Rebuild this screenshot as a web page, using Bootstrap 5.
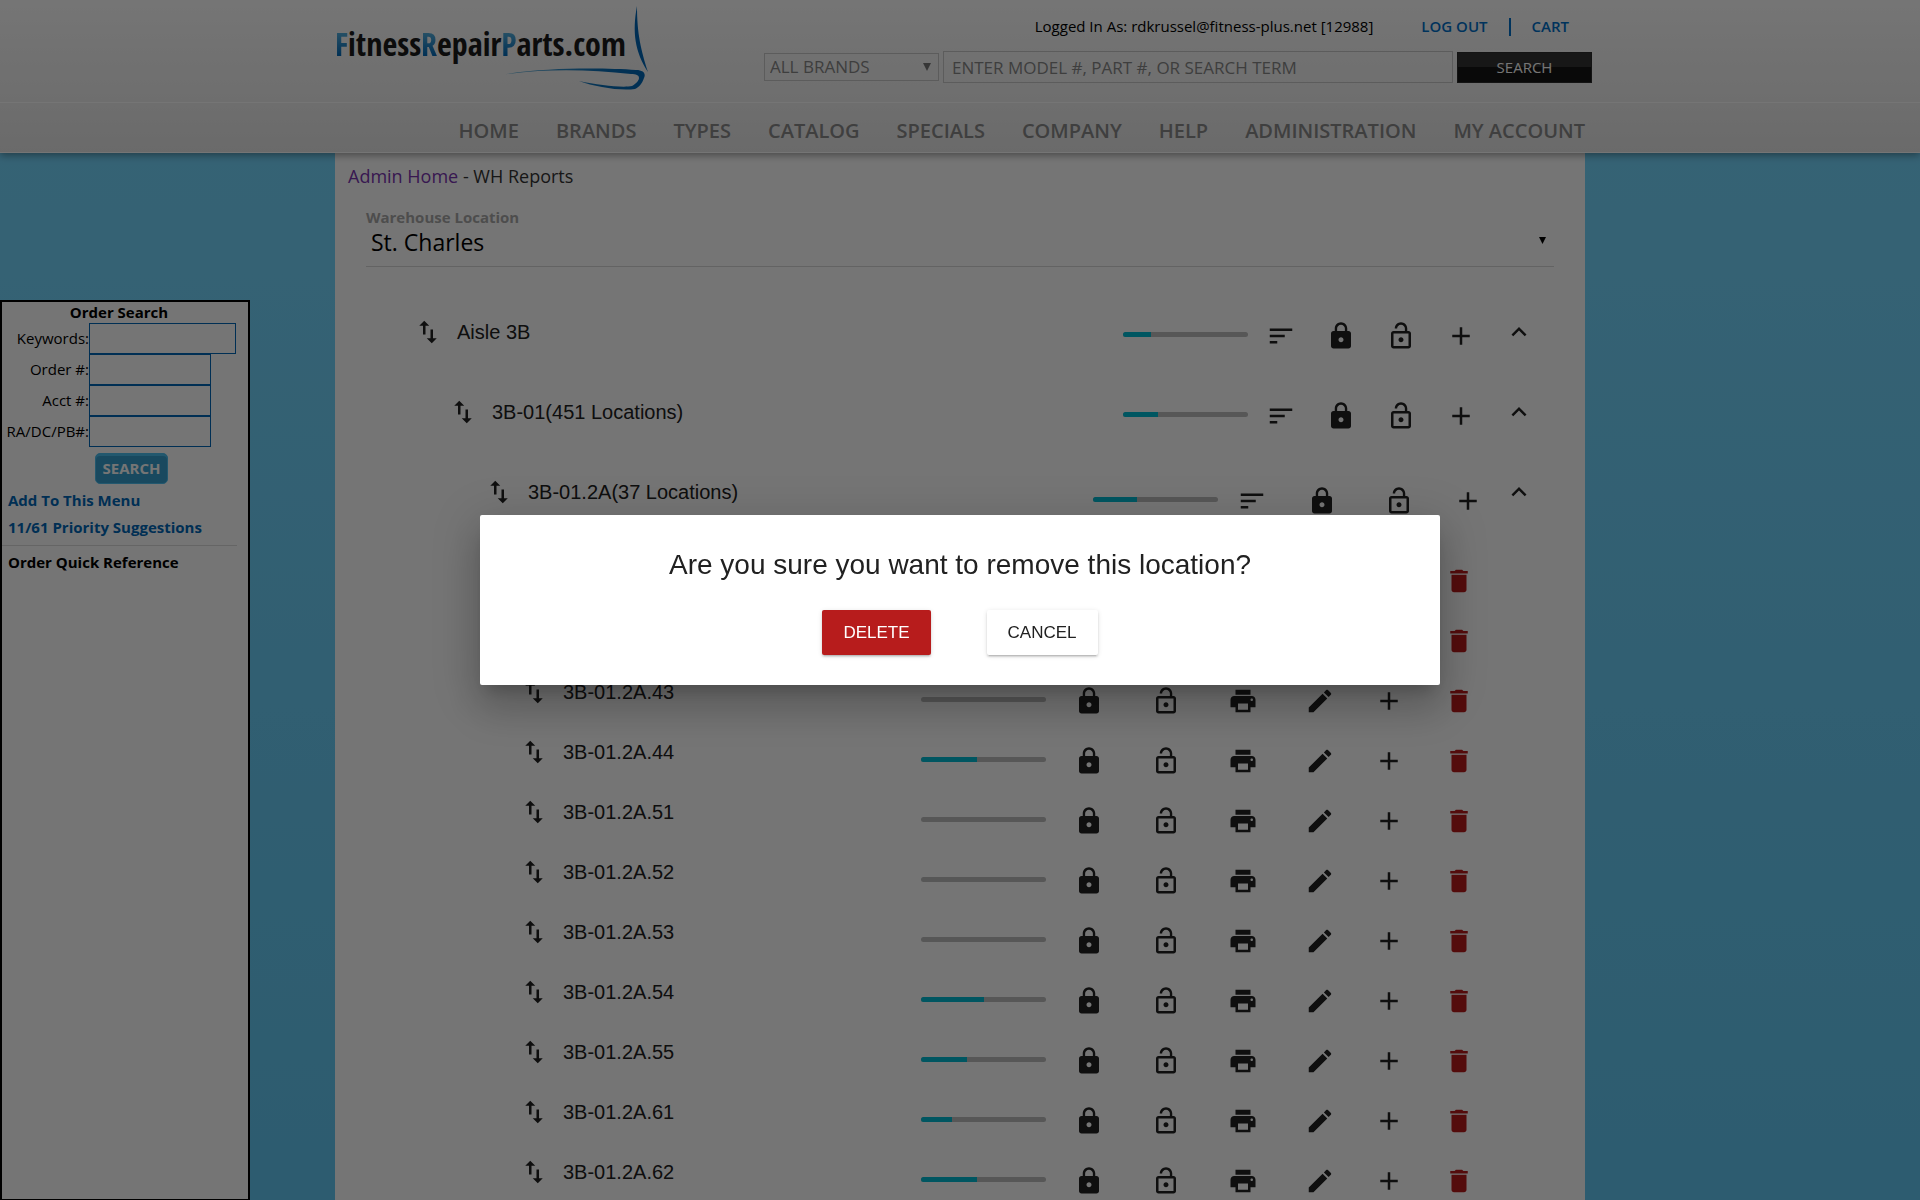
<!DOCTYPE html>
<html lang="en">
<head>
<meta charset="utf-8">
<meta name="viewport" content="width=device-width, initial-scale=1">
<title>WH Reports - FitnessRepairParts.com</title>
<link href="https://cdn.jsdelivr.net/npm/bootstrap@5.3.0/dist/css/bootstrap.min.css" rel="stylesheet">
<style>
  body { font-family: "Open Sans", sans-serif; font-size: 16px; color: #000; background: linear-gradient(#78d9ff, #62c8f3) fixed; min-height: 100vh; overflow: hidden; }
  a { text-decoration: none; }
  .site-width { width: 100%; max-width: 1250px; margin: 0 auto; }
  .site-header { background: linear-gradient(#fff, #e8e8e8); border-bottom: 1px solid #fff; box-shadow: 0 2px 8px rgba(0,0,0,.4); z-index: 2; }
  .header-top { height: 102px; }
  .brand-word { font: 300 32px/40px "Liberation Sans Narrow", "Open Sans Condensed", "DejaVu Sans Condensed", sans-serif; color: #1c1c1c; left: 0; top: 24px; }
  .brand-word b { font-weight: 700; background: linear-gradient(#5ab4e0 20%, #0068b8 80%); -webkit-background-clip: text; background-clip: text; color: transparent; }
  .brand-swoosh { left: 165px; top: 4px; }
  .account-line { height: 51px; padding-top: 2px; font-size: 15px; }
  .account-line a { color: #0070c9; font-weight: 600; }
  .account-rule { width: 2px; height: 18px; background: #0070c9; margin: 0 21px; }
  .search-form { margin-right: -7px; }
  .brand-pick, .term-box { border: 1px solid #c8c8c8; background: transparent; color: #888; font-size: 17px; line-height: 24px; border-radius: 0; }
  .brand-pick { width: 175px; height: 28px; padding: 0 5px; appearance: none; }
  .term-box { width: 510px; height: 32px; padding: 0 8px; }
  .term-box::placeholder { color: #888; opacity: 1; }
  .search-go { width: 135px; height: 31px; border: 1px solid #2c2c2c; background: linear-gradient(#333 50%, #141414 50%); color: #fff; font-size: 15px; }
  .pick-arrow { right: 8px; top: 50%; transform: translateY(-50%); pointer-events: none; }
  .main-nav { border-top: 1px solid #fff; height: 50px; padding-top: 4px; }
  .main-nav .nav-link { color: #898989; font-size: 20px; font-weight: 600; line-height: 48px; padding: 0; }
  .main-nav .nav { column-gap: 37px; }
  .report-panel { background: #fff; min-height: 1050px; padding-top: 9px; }
  .crumbs { padding-left: 13px; font-size: 18px; line-height: 28px; color: #333; }
  .crumbs a { color: #7a35b0; }
  .wh-field { margin: 17px 31px 25px; border-bottom: 1px solid #d8d8d8; }
  .wh-field label { font-size: 15px; line-height: 20px; font-weight: 700; color: #a9a9a9; }
  .wh-field select { appearance: none; width: 100%; height: 39px; border: 0; background: transparent; font-size: 23px; line-height: 30px; padding: 0 0 9px 5px; color: #000; }
  .wh-field svg { right: 8px; bottom: 22px; pointer-events: none; }
  .loc-row { height: 80px; padding-right: 38px; padding-left: 78px; font: 20px/30px "Liberation Sans", sans-serif; color: #212121; }
  .loc-row.depth-2 { padding-left: 113px; }
  .loc-row.depth-3 { padding-left: 149px; padding-right: 46px; margin-bottom: 10px; }
  .loc-row.depth-4 { padding-left: 184px; padding-right: 88px; height: 60px; }
  .loc-name { margin-left: 14px; }
  .icon-btn { border: 0; padding: 0; background: none; color: #212121; display: flex; justify-content: center; width: 60px; }
  .icon-btn svg, .drag-btn svg { width: 30px; height: 30px; fill: currentColor; display: block; }
  .drag-btn { border: 0; padding: 0; background: none; color: #212121; }
  .icon-tools { padding-top: 8px; }
  .depth-3 .icon-tools, .depth-4 .icon-tools { padding-top: 18px; }
  .wide-cell { width: 77px; }
  .mid-cell { width: 62px; }
  .fold-cell { width: 56px; }
  .depth-3 .fold-cell { width: 40px; }
  .trash-btn { color: #b71c1c; }
  .fill-meter { width: 125px; height: 5px; border-radius: 3px; background: #bdbdbd; margin: 0 3px 3px 0; }
  .depth-4 .fill-meter { margin-right: 4px; }
  .fill-meter .progress-bar { background: #00bcd4; }
  .order-panel { left: 0; top: 300px; bottom: 0; width: 250px; border: 2px solid #000; border-bottom-width: 1px; background: #fff; font-size: 15px; z-index: 3; }
  .order-panel h2 { font-size: 15px; line-height: 21px; font-weight: 700; margin: 0; padding-right: 12px; text-align: center; }
  .order-panel .field-line { height: 31px; }
  .order-panel label { width: 87px; text-align: right; }
  .order-panel input { width: 122px; height: 31px; border: 1px solid #0068b8; background: #fff; padding: 0 4px; }
  .order-panel input.long-box { width: 147px; }
  .order-go { margin: 6px 0 0 93px; width: 73px; height: 31px; border: 1px solid #4cc0f0; border-radius: 5px; box-shadow: inset 0 2px 0 #4cc0f0; background: #38a0d0; color: #fff; font-weight: 700; font-size: 15px; padding: 0; }
  .side-links { padding: 3px 0 0 6px; font-weight: 700; line-height: 27px; }
  .side-links a { color: #0068b8; display: block; }
  .side-rule { border-top: 1px solid #ddd; margin: 4px 11px 3px 0; }
  .modal-backdrop.show { opacity: .54; }
  .confirm-dialog { max-width: 50%; }
  .confirm-box { border: 0; border-radius: 2px; font-family: "Liberation Sans", sans-serif; color: #212121; padding: 30px; box-shadow: 0 11px 15px -7px rgba(0,0,0,.2), 0 24px 38px 3px rgba(0,0,0,.14), 0 9px 46px 8px rgba(0,0,0,.12); }
  .confirm-box h1 { font-size: 28px; line-height: 40px; font-weight: 400; margin: 0 0 25px; text-align: center; }
  .confirm-box .btn { font-size: 17px; line-height: 25px; padding: 10px 21px; border-radius: 2px; border: 0; box-shadow: 0 3px 1px -2px rgba(0,0,0,.1), 0 2px 2px rgba(0,0,0,.12), 0 1px 5px rgba(0,0,0,.12); }
  .btn-remove, .btn-remove:hover { background: #b71c1c; color: #fff; }
  .btn-keep, .btn-keep:hover { background: #fff; color: #212121; }
</style>
<script src="https://cdn.jsdelivr.net/npm/bootstrap@5.3.0/dist/js/bootstrap.bundle.min.js"></script>
</head>
<body>
<svg class="d-none" aria-hidden="true">
  <symbol id="i-swap" viewBox="0 0 24 24"><path d="M16 17.01V10h-2v7.01h-3L15 21l4-3.99h-3zM9 3L5 6.99h3V14h2V6.99h3L9 3z"/></symbol>
  <symbol id="i-sort" viewBox="0 0 24 24"><path d="M3 18h6v-2H3v2zM3 6v2h18V6H3zm0 7h12v-2H3v2z"/></symbol>
  <symbol id="i-lock" viewBox="0 0 24 24"><path d="M18 8h-1V6c0-2.76-2.24-5-5-5S7 3.24 7 6v2H6c-1.1 0-2 .9-2 2v10c0 1.1.9 2 2 2h12c1.1 0 2-.9 2-2V10c0-1.1-.9-2-2-2zm-6 9c-1.1 0-2-.9-2-2s.9-2 2-2 2 .9 2 2-.9 2-2 2zm3.1-9H8.9V6c0-1.71 1.39-3.1 3.1-3.1s3.1 1.39 3.1 3.1v2z"/></symbol>
  <symbol id="i-unlock" viewBox="0 0 24 24"><path d="M12 17c1.100 0 2-.9 2-2s-.9-2-2-2-2 .9-2 2 .9 2 2 2zm6-9h-1V6c0-2.760-2.240-5-5-5S7 3.240 7 6h1.900c0-1.710 1.390-3.100 3.100-3.100s3.100 1.390 3.100 3.100v2H6c-1.100 0-2 .9-2 2v10c0 1.100.9 2 2 2h12c1.100 0 2-.9 2-2V10c0-1.100-.9-2-2-2zm0 12H6V10h12v10z"/></symbol>
  <symbol id="i-add" viewBox="0 0 24 24"><path d="M19 13h-6v6h-2v-6H5v-2h6V5h2v6h6v2z"/></symbol>
  <symbol id="i-fold" viewBox="0 0 24 24"><path d="M12 8l-6 6 1.410 1.410L12 10.830l4.590 4.580L18 14z"/></symbol>
  <symbol id="i-print" viewBox="0 0 24 24"><path d="M19 8H5c-1.660 0-3 1.340-3 3v6h4v4h12v-4h4v-6c0-1.660-1.340-3-3-3zm-3 11H8v-5h8v5zm3-7c-.55 0-1-.45-1-1s.45-1 1-1 1 .45 1 1-.45 1-1 1zm-1-9H6v4h12V3z"/></symbol>
  <symbol id="i-edit" viewBox="0 0 24 24"><path d="M3 17.250V21h3.750L17.810 9.940l-3.750-3.750L3 17.250zM20.710 7.040c.39-.39.39-1.020 0-1.410l-2.340-2.340c-.39-.39-1.020-.39-1.410 0l-1.830 1.830 3.750 3.750 1.830-1.830z"/></symbol>
  <symbol id="i-trash" viewBox="0 0 24 24"><path d="M6 19c0 1.100.9 2 2 2h8c1.100 0 2-.9 2-2V7H6v12zM19 4h-3.500l-1-1h-5l-1 1H5v2h14V4z"/></symbol>
</svg>

<header class="site-header position-relative">
  <div class="site-width header-top d-flex justify-content-end position-relative">
    <a href="#" class="brand-word position-absolute text-nowrap" aria-label="FitnessRepairParts.com"><b>F</b>itness<b>R</b>epair<b>P</b>arts.com</a>
    <svg class="brand-swoosh position-absolute" width="154" height="88" viewBox="0 0 154 88" aria-hidden="true">
      <defs><linearGradient id="swoosh"><stop offset="0" stop-color="#6ab8dc"/><stop offset=".7" stop-color="#0a6fb8"/><stop offset="1" stop-color="#0068b8"/></linearGradient></defs>
      <path fill="#0068b8" d="M137 2C132 28 135 48 148 68 141 46 137 30 137 2z"/>
      <path fill="url(#swoosh)" d="M1 71C45 63 105 64 136 66c8 0 10 4 8 8-2 6-5 9-9 11-15 2-40-2-56-8 20 4 43 7 53 5 5-3 7-6 7-8 0-3-3-4-8-4C90 66 50 64 1 71z"/>
    </svg>
    <div>
      <div class="account-line d-flex align-items-center justify-content-end">
        <span class="me-5">Logged In As: rdkrussel@fitness-plus.net [12988]</span>
        <a href="#">LOG OUT</a><span class="account-rule"></span><a href="#" class="me-3">CART</a>
      </div>
      <form class="search-form d-flex align-items-center">
        <div class="position-relative me-1">
          <select class="brand-pick d-block" aria-label="Brand"><option>ALL BRANDS</option></select>
          <svg class="pick-arrow position-absolute" width="8" height="8" viewBox="0 0 8 8" aria-hidden="true"><path fill="#777" d="M0 0h8L4 8z"/></svg>
        </div>
        <input class="term-box me-1" type="text" aria-label="Search term" placeholder="ENTER MODEL #, PART #, OR SEARCH TERM">
        <button class="search-go" type="button">SEARCH</button>
      </form>
    </div>
  </div>
  <nav class="main-nav">
    <div class="site-width nav justify-content-end">
      <a class="nav-link" href="#">HOME</a><a class="nav-link" href="#">BRANDS</a><a class="nav-link" href="#">TYPES</a><a class="nav-link" href="#">CATALOG</a><a class="nav-link" href="#">SPECIALS</a><a class="nav-link" href="#">COMPANY</a><a class="nav-link" href="#">HELP</a><a class="nav-link" href="#">ADMINISTRATION</a><a class="nav-link" href="#">MY ACCOUNT</a>
    </div>
  </nav>
</header>

<aside class="order-panel position-fixed">
  <h2>Order Search</h2>
  <form>
    <div class="field-line d-flex align-items-center"><label for="kw">Keywords:</label><input id="kw" class="long-box" type="text"></div>
    <div class="field-line d-flex align-items-center"><label for="ord">Order #:</label><input id="ord" type="text"></div>
    <div class="field-line d-flex align-items-center"><label for="acct">Acct #:</label><input id="acct" type="text"></div>
    <div class="field-line d-flex align-items-center"><label for="ra">RA/DC/PB#:</label><input id="ra" type="text"></div>
    <button class="order-go d-block" type="button">SEARCH</button>
  </form>
  <div class="side-links"><a href="#">Add To This Menu</a><a href="#">11/61 Priority Suggestions</a></div>
  <div class="side-rule"></div>
  <div class="side-links pt-0">Order Quick Reference</div>
</aside>

<main class="site-width report-panel">
  <div class="crumbs"><a href="#">Admin Home</a> - WH Reports</div>
  <div class="wh-field position-relative">
    <label class="d-block" for="wh">Warehouse Location</label>
    <select id="wh"><option>St. Charles</option></select>
    <svg class="position-absolute" width="7" height="7" viewBox="0 0 7 7" aria-hidden="true"><path d="M0 0h7L3.500 7z"/></svg>
  </div>
  <div id="locations"></div>
</main>

<div class="modal-backdrop show"></div>
<div class="modal d-block" tabindex="-1" role="dialog" aria-modal="true" aria-labelledby="ask">
  <div class="modal-dialog modal-dialog-centered confirm-dialog">
    <div class="modal-content confirm-box">
      <h1 id="ask">Are you sure you want to remove this location?</h1>
      <div class="d-flex justify-content-center">
        <button type="button" class="btn btn-remove me-5">DELETE</button>
        <button type="button" class="btn btn-keep ms-2">CANCEL</button>
      </div>
    </div>
  </div>
</div>

<script>
  // depth, name, percent filled
  const locations = [
    [1, 'Aisle 3B', 22], [2, '3B-01(451 Locations)', 28], [3, '3B-01.2A(37 Locations)', 35],
    [4, '3B-01.2A.41', 0], [4, '3B-01.2A.42', 0], [4, '3B-01.2A.43', 0], [4, '3B-01.2A.44', 45],
    [4, '3B-01.2A.51', 0], [4, '3B-01.2A.52', 0], [4, '3B-01.2A.53', 0], [4, '3B-01.2A.54', 50],
    [4, '3B-01.2A.55', 37], [4, '3B-01.2A.61', 25], [4, '3B-01.2A.62', 45]
  ];
  const btn = (icon, label, cls = '') =>
    `<button type="button" class="icon-btn ${cls}" aria-label="${label}"><svg><use href="#i-${icon}"/></svg></button>`;
  const tools = depth => {
    if (depth === 4) return btn('lock', 'Lock', 'wide-cell') + btn('unlock', 'Unlock', 'wide-cell') + btn('print', 'Print', 'wide-cell')
      + btn('edit', 'Edit', 'wide-cell') + btn('add', 'Add', 'mid-cell') + btn('trash', 'Delete', 'wide-cell trash-btn');
    const wide = depth === 3 ? 'wide-cell' : '', mid = depth === 3 ? 'mid-cell' : '';
    return btn('sort', 'Sort', mid) + btn('lock', 'Lock', wide) + btn('unlock', 'Unlock', wide) + btn('add', 'Add', mid);
  };
  document.getElementById('locations').innerHTML = locations.map(([depth, name, pct]) => `
    <div class="loc-row depth-${depth} d-flex align-items-center">
      <button type="button" class="drag-btn" aria-label="Move"><svg><use href="#i-swap"/></svg></button>
      <span class="loc-name">${name}</span>
      <div class="icon-tools d-flex align-items-center ms-auto">
        <div class="progress fill-meter"><div class="progress-bar" style="width:${pct}%"></div></div>
        ${tools(depth)}
      </div>
      ${depth < 4 ? btn('fold', 'Collapse', 'fold-cell') : ''}
    </div>`).join('');
</script>
</body>
</html>
